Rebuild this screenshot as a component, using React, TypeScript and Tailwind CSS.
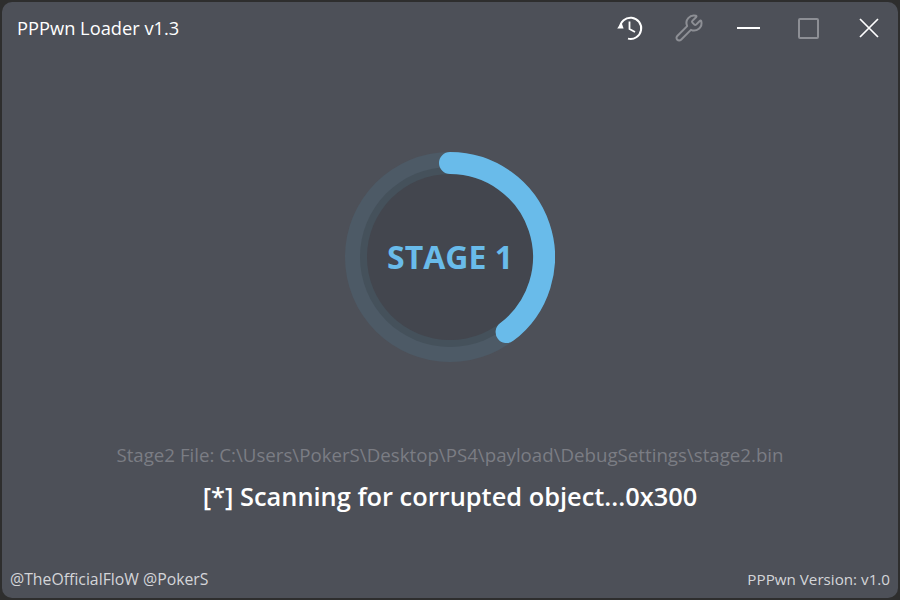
import { Wrench } from "lucide-react";

function Ring() {
  return (
    <div className="relative flex h-[210px] w-[210px] items-center justify-center">
      <svg className="absolute inset-0" width="210" height="210" viewBox="0 0 210 210">
        <circle cx="105" cy="105" r="105" fill="#4d5a66" />
        <circle cx="105" cy="105" r="90" fill="#45515b" />
        <circle cx="105" cy="105" r="83" fill="#43464e" />
        <path d="M105 11 A94 94 0 0 1 161.6 180.07" fill="none" stroke="#69bbea" strokeWidth="22" strokeLinecap="round" />
      </svg>
      <span className="relative -mt-px text-[32px] font-bold leading-none text-[#69bbea]">STAGE 1</span>
    </div>
  );
}

export default function App() {
  return (
    <div className="h-[600px] w-[900px] bg-[#2e2e2e] p-0.5 font-['Open_Sans',sans-serif]">
      <div className="flex h-full flex-col rounded-[10px] bg-[#4d5058]">
        <header className="flex h-[52px] items-center justify-between pl-[15px] pr-[19px]">
          <span className="text-[18.3px] text-white">PPPwn Loader v1.3</span>
          <div className="flex items-center">
            <svg width="28" height="28" viewBox="0 0 28 28" fill="none" className="mr-[30px] text-white">
              <path d="M4 14 A10.6 10.6 0 1 1 12 24.6" stroke="currentColor" strokeWidth="2" />
              <path d="M1.2 14.5 L7.6 14.5 L5.4 8.2 Z" fill="currentColor" />
              <path d="M13.5 7.5 L13.5 15 L19 18" stroke="currentColor" strokeWidth="1.8" />
            </svg>
            <Wrench className="mr-[33.5px] text-[#8d8f95]" size={30} strokeWidth={1.6} />
            <div className="mr-[38px] h-0.5 w-[23px] bg-white" />
            <div className="mr-10 h-[21px] w-[21px] rounded-[2px] border-2 border-[#8d8f95]" />
            <svg width="20" height="20" viewBox="0 0 20 20" className="text-white">
              <path d="M1 1 L19 19 M19 1 L1 19" stroke="currentColor" strokeWidth="1.7" />
            </svg>
          </div>
        </header>
        <main className="flex flex-1 flex-col items-center">
          <div className="mt-[98px]">
            <Ring />
          </div>
          <p className="mt-[81px] text-[18.7px] leading-[24px] text-[#7b7d84]">
            Stage2 File: C:\Users\PokerS\Desktop\PS4\payload\DebugSettings\stage2.bin
          </p>
          <p className="mt-[12px] text-[25.4px] font-semibold leading-[34px] text-white">
            [*] Scanning for corrupted object...0x300
          </p>
        </main>
        <footer className="flex items-center justify-between px-2 pb-[9px] leading-5 text-[#d4d5d8]">
          <span className="text-[15.8px]">@TheOfficialFloW @PokerS</span>
          <span className="text-[15.2px]">PPPwn Version: v1.0</span>
        </footer>
      </div>
    </div>
  );
}
